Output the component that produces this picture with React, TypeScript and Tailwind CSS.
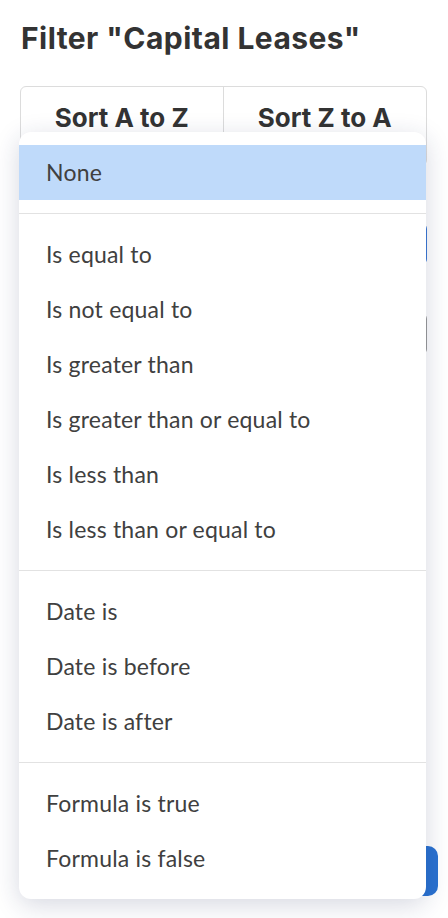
import React from "react";

const sections: string[][] = [
  ["None"],
  [
    "Is equal to",
    "Is not equal to",
    "Is greater than",
    "Is greater than or equal to",
    "Is less than",
    "Is less than or equal to",
  ],
  ["Date is", "Date is before", "Date is after"],
  ["Formula is true", "Formula is false"],
];

export default function App() {
  return (
    <div className="relative w-[448px] h-[918px] bg-white overflow-hidden">
      {/* page content behind */}
      <div className="flex flex-col pl-[20px] pr-[21px] pt-[18px]">
        <h1
          className="text-[30px] leading-[40px] font-bold text-[#333] pl-[1px] tracking-[0.45px]"
          style={{ fontFamily: "Inter, 'Liberation Sans', sans-serif" }}
        >
          Filter "Capital Leases"
        </h1>
        <div
          className="mt-[28px] grid grid-cols-2 h-[80px] border border-[#dcdcdc] rounded-[6px] text-[26px] font-bold text-[#333]"
          style={{ fontFamily: "Inter, 'Liberation Sans', sans-serif" }}
        >
          <div className="flex justify-center pt-[11px] border-r border-[#dcdcdc]">Sort A to Z</div>
          <div className="flex justify-center pt-[11px]">Sort Z to A</div>
        </div>
        <div className="mt-[57px] h-[42px] border-2 border-[#3a78d4] rounded-[6px]" />
        <div className="mt-[48px] h-[42px] border-2 border-[#9a9a9a] rounded-[6px]" />
        <div className="mt-[491px] ml-auto w-[200px] h-[50px] bg-[#2a72d0] rounded-[10px] -mr-[11px]" />
      </div>

      {/* dropdown menu */}
      <div
        className="absolute left-[19px] top-[132px] w-[407px] bg-white rounded-[12px] shadow-[0_6px_26px_rgba(30,40,90,0.18)] overflow-hidden"
        style={{ fontFamily: "Lato, 'Liberation Sans', sans-serif" }}
      >
        {sections.map((items, si) => (
          <div key={si} className={si > 0 ? "border-t border-[#e2e2e2]" : ""}>
            <div className="py-[13px] flex flex-col">
              {items.map((label) => (
                <div
                  key={label}
                  className={
                    "h-[55px] flex items-center pl-[27px] text-[23px] tracking-[0.2px] text-[#404040] " +
                    (label === "None" ? "bg-[#bfdafa]" : "")
                  }
                >
                  {label}
                </div>
              ))}
            </div>
          </div>
        ))}
      </div>
    </div>
  );
}
